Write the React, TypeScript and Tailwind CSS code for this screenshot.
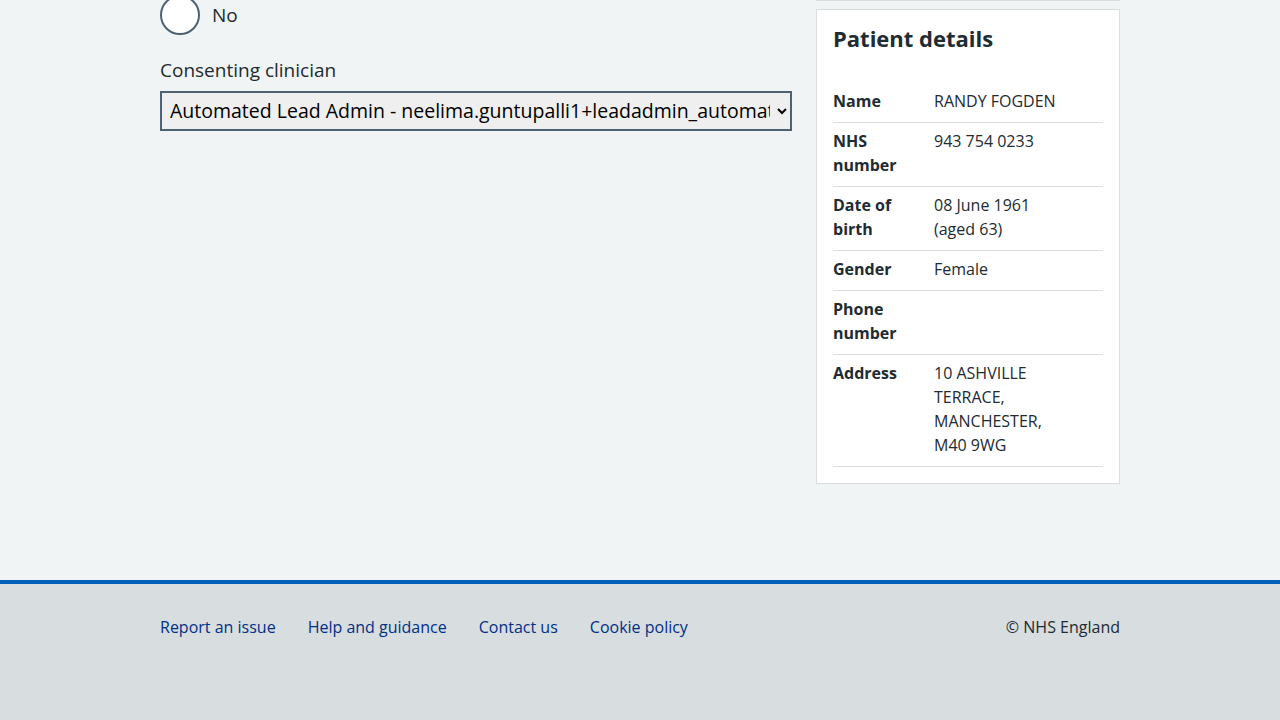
import React from 'react';

const rows: { key: string[]; value: string[] }[] = [
    { key: ['Name'], value: ['RANDY FOGDEN'] },
    { key: ['NHS', 'number'], value: ['943 754 0233'] },
    { key: ['Date of', 'birth'], value: ['08 June 1961', '(aged 63)'] },
    { key: ['Gender'], value: ['Female'] },
    { key: ['Phone', 'number'], value: [] },
    { key: ['Address'], value: ['10 ASHVILLE', 'TERRACE,', 'MANCHESTER,', 'M40 9WG'] },
];

const App: React.FC = () => {
    return (
        <div className="min-h-[720px] flex flex-col bg-[#f0f4f5] text-[#212b32] font-['Open_Sans',sans-serif] overflow-hidden">
            <main className="flex-1 w-[960px] mx-auto flex gap-6 -mt-[5px]">
                <div className="w-[632px]">
                    <div className="flex items-center gap-3">
                        <span className="w-10 h-10 rounded-full border-2 border-[#4c6272] bg-white" />
                        <span className="text-[19px] leading-7">No</span>
                    </div>
                    <label className="block mt-[21px] text-[19px] leading-7">Consenting clinician</label>
                    <select className="mt-[7px] w-full h-10 border-2 border-[#4c6272] bg-[#efefef] text-[19.5px] text-black pl-1 pr-1 pb-[2px] outline-none">
                        <option>Automated Lead Admin - neelima.guntupalli1+leadadmin_automation@nhs.net</option>
                    </select>
                </div>
                <div className="w-[304px]">
                    <div className="h-[2px] bg-[#d8dde0] mt-[4px]" />
                    <div className="mt-[8px] bg-white border border-[#d8dde0] px-4 pt-[12px] pb-4">
                        <h2 className="text-[22px] leading-8 font-bold mb-[29px]">Patient details</h2>
                        <dl>
                            {rows.map((r) => (
                                <div key={r.key.join(' ')} className="flex border-b border-[#d8dde0] pt-[6px] pb-[9px] text-[16px] leading-6">
                                    <dt className="w-[101px] font-bold pr-2">
                                        {r.key.map((k) => (
                                            <div key={k}>{k}</div>
                                        ))}
                                    </dt>
                                    <dd>
                                        {r.value.map((v) => (
                                            <div key={v}>{v}</div>
                                        ))}
                                    </dd>
                                </div>
                            ))}
                        </dl>
                    </div>
                </div>
            </main>
            <footer className="h-[140px] bg-[#d8dde0] border-t-4 border-[#005eb8]">
                <div className="w-[960px] mx-auto flex justify-between items-center pt-[31px] text-[16px] leading-6">
                    <ul className="flex gap-8 text-[#003087]">
                        <li><a href="#">Report an issue</a></li>
                        <li><a href="#">Help and guidance</a></li>
                        <li><a href="#">Contact us</a></li>
                        <li><a href="#">Cookie policy</a></li>
                    </ul>
                    <p>© NHS England</p>
                </div>
            </footer>
        </div>
    );
};

export default App;
